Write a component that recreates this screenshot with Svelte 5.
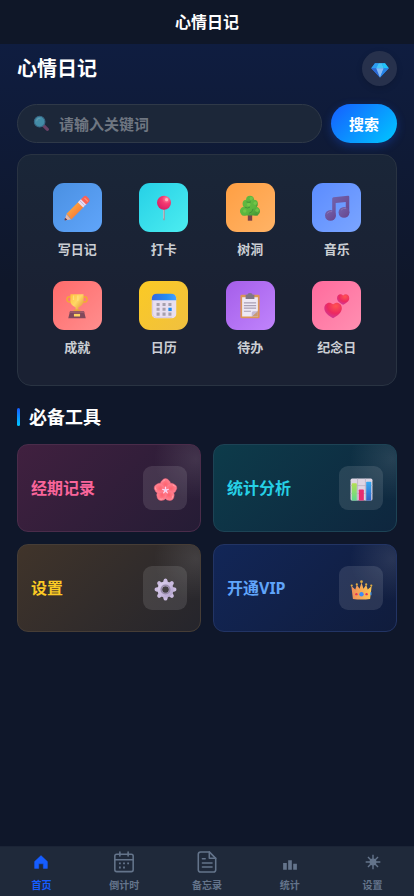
<!-- src/App.svelte -->
<script>
  let keyword = "";
  let activeTab = "home";

  const entries = [
    { name: "写日记", icon: "pencil", color: "blue" },
    { name: "打卡", icon: "pin", color: "cyan" },
    { name: "树洞", icon: "tree", color: "orange" },
    { name: "音乐", icon: "music", color: "indigo" },
    { name: "成就", icon: "trophy", color: "red" },
    { name: "日历", icon: "calendar", color: "yellow" },
    { name: "待办", icon: "clipboard", color: "purple" },
    { name: "纪念日", icon: "hearts", color: "pink" }
  ];

  const tools = [
    { name: "经期记录", icon: "flower", theme: "rose" },
    { name: "统计分析", icon: "chart", theme: "teal" },
    { name: "设置", icon: "gear", theme: "gold" },
    { name: "开通VIP", icon: "crown", theme: "navy" }
  ];

  const tabs = [
    { id: "home", name: "首页" },
    { id: "countdown", name: "倒计时" },
    { id: "memo", name: "备忘录" },
    { id: "stats", name: "统计" },
    { id: "settings", name: "设置" }
  ];

  const petals = [0, 72, 144, 216, 288];
  const teeth = [0, 45, 90, 135, 180, 225, 270, 315];

  const handleSearch = (event) => {
    event.preventDefault();
    keyword = keyword.trim();
  };
</script>

{#snippet emoji(name)}
  <svg class="emoji" viewBox="0 0 32 32" aria-hidden="true">
    {#if name === "gem"}
      <path d="M8 5h16l6 8-14 15L2 13z" fill="#2f86e6" />
      <path d="M8 5h6l-4 8H2z" fill="#2d9df0" />
      <path d="M14 5h5l3 8H10z" fill="#45c5f5" />
      <path d="M19 5h5l6 8h-8z" fill="#20c5f7" />
      <path d="M2 13h8l6 15z" fill="#2c68d4" />
      <path d="M10 13h12l-6 15z" fill="#86b9f3" />
      <path d="M22 13h8L16 28z" fill="#2583e5" />
    {:else if name === "search"}
      <path d="M20 20l7 7" stroke="#9c5383" stroke-width="6" stroke-linecap="round" />
      <circle cx="12.500" cy="12.500" r="10" fill="#5ed0f1" stroke="#4b93b8" stroke-width="2" />
      <path d="M7 11a6 6 0 0 1 6-5" stroke="#92e6fa" stroke-width="2" fill="none" stroke-linecap="round" />
    {:else if name === "pencil"}
      <defs>
        <linearGradient id="wood" x1="0" y1="0" x2="1" y2="1">
          <stop offset="0.3" stop-color="#ffa23d" />
          <stop offset="0.8" stop-color="#f4753a" />
        </linearGradient>
      </defs>
      <path d="M4 23l5 6-6 1q-1 0-1-1z" fill="#e9b7a5" />
      <path d="M2.500 27l2.500 2.500L2.500 30.300Q1.500 30.300 1.700 29z" fill="#5b3a51" />
      <path d="M4 22.500L18 8.500l6 6L9.500 29z" fill="url(#wood)" />
      <path d="M17 9.500l4-4 6 6-4 4z" fill="#e7dbef" />
      <path d="M19 7.500l6 6" stroke="#bfaed0" />
      <path d="M20.500 6l3-3q2-2 4 0l2 2q2 2 0 4l-3 3z" fill="#fb6257" />
      <path d="M25 5l3 3" stroke="#ff8f73" stroke-width="1.500" stroke-linecap="round" />
    {:else if name === "pin"}
      <defs>
        <radialGradient id="ball" cx="0.68" cy="0.25" r="0.8">
          <stop offset="0" stop-color="#ff8ca5" />
          <stop offset="0.4" stop-color="#f33a70" />
          <stop offset="1" stop-color="#d91d65" />
        </radialGradient>
      </defs>
      <path d="M16 17v12" stroke="#91a2ae" stroke-width="2.200" stroke-linecap="round" />
      <path d="M15.400 18v10" stroke="#bec9d2" stroke-width="0.800" />
      <circle cx="16" cy="10" r="8" fill="url(#ball)" />
      <circle cx="19" cy="6.500" r="1.800" fill="#ffb4be" />
    {:else if name === "tree"}
      <defs>
        <linearGradient id="leaf" x1="0" y1="0" x2="1" y2="1">
          <stop offset="0" stop-color="#63b941" />
          <stop offset="0.55" stop-color="#5bb63f" />
          <stop offset="1" stop-color="#3f9134" />
        </linearGradient>
      </defs>
      <path d="M13.500 22h5v8.500h-5z" fill="#7a4148" />
      <g fill="url(#leaf)">
        <circle cx="16" cy="6.500" r="4.500" />
        <circle cx="12" cy="11" r="4.500" />
        <circle cx="20.500" cy="11" r="4.500" />
        <circle cx="9.500" cy="19.500" r="5" />
        <circle cx="22.500" cy="19.500" r="5" />
        <path d="M10 10h12l3 14.500H7z" />
      </g>
      <g fill="#7fcf4d" opacity="0.6">
        <circle cx="17.500" cy="5" r="2" />
        <circle cx="22" cy="10.500" r="2" />
        <circle cx="14.500" cy="12" r="2" />
        <circle cx="24" cy="18.500" r="2" />
        <circle cx="10" cy="19.500" r="2" />
      </g>
      <path d="M10 15q3 2 6 0M15 22q4-1 4.500-5M12 9q3 1 5 0" stroke="#3f8b38" fill="none" />
    {:else if name === "music"}
      <defs>
        <linearGradient id="note" x1="0" y1="0" x2="1" y2="1">
          <stop offset="0" stop-color="#7163ad" />
          <stop offset="1" stop-color="#68458c" />
        </linearGradient>
      </defs>
      <path d="M10.500 5.500Q10.500 4 12 3.800L28.500 2Q30 1.800 30 3v19h-4V9L14.500 10.300V26h-4z" fill="url(#note)" />
      <circle cx="8.500" cy="24.500" r="6.200" fill="url(#note)" />
      <circle cx="24" cy="21" r="6.200" fill="url(#note)" />
      <path d="M5 22q2-2.500 5-2M21 18q2-2.500 5-1.500" stroke="#8c76b6" fill="none" stroke-linecap="round" />
    {:else if name === "trophy"}
      <defs>
        <linearGradient id="cup" x1="0" y1="0" x2="1" y2="1">
          <stop offset="0" stop-color="#ffc13e" />
          <stop offset="0.45" stop-color="#ffd766" />
          <stop offset="1" stop-color="#db882e" />
        </linearGradient>
      </defs>
      <g fill="none" stroke="#f4a936" stroke-width="1.800">
        <circle cx="7.500" cy="8.500" r="3" />
        <circle cx="24.500" cy="8.500" r="3" />
      </g>
      <path d="M8.500 2.500h15V10q0 5-5 7l-1 1v4h-3v-4l-1-1q-5-2-5-7z" fill="url(#cup)" />
      <path d="M12 4v5M17 4v6" stroke="#ffe68b" stroke-width="1.500" opacity="0.7" />
      <path d="M12.500 20h7l1 3h-9z" fill="#e9a33c" />
      <path d="M8 22h16l2 8H6z" fill="#81495b" />
      <path d="M8 22h16l.5 2h-17z" fill="#9b5a69" />
      <path d="M12.500 25h7v3h-7z" fill="#ffd363" />
    {:else if name === "calendar"}
      <defs>
        <linearGradient id="top">
          <stop offset="0" stop-color="#3566df" />
          <stop offset="0.6" stop-color="#258cf2" />
          <stop offset="1" stop-color="#45a1ff" />
        </linearGradient>
      </defs>
      <rect x="2" y="2.500" width="28" height="27.500" rx="5" fill="#e8dff0" />
      <path d="M2 9.500V8q0-6 6-6h16q6 0 6 6v1.500z" fill="url(#top)" />
      <path d="M3 10v15q0 4 4 4h18" stroke="#d2c4df" fill="none" />
      <g fill="#a7a0ad">
        <path d="M7.500 12.500h3.500v3.500H7.500zM14.300 12.500h3.500v3.500h-3.500zM21 12.500h3.500v3.500H21zM7.500 18h3.500v3.500H7.500zM14.300 18h3.500v3.500h-3.500zM7.500 23.500h3.500v3.500H7.500zM14.300 23.500h3.500v3.500h-3.500zM21 23.500h3.500v3.500H21z" />
      </g>
      <path d="M21 18h3.800v3.800H21z" fill="#218cee" />
    {:else if name === "clipboard"}
      <rect x="5" y="3" width="22" height="27" rx="1.500" fill="#dc9655" />
      <path d="M7 6h18v22H7z" fill="#eee9f5" />
      <path d="M25 21v7h-7z" fill="#c79a77" />
      <path d="M18 28v-4q0-2 2-2h5z" fill="#c4b8d3" />
      <path d="M11 3h2q0-2 3-2t3 2h2v5H11z" fill="#807786" />
      <path d="M9 12.500h14M9 15.500h14M9 18.500h14M9 22h8" stroke="#a99fb4" stroke-width="1.300" />
    {:else if name === "hearts"}
      <defs>
        <radialGradient id="heart" cx="0.65" cy="0.22" r="0.85">
          <stop offset="0" stop-color="#ff5450" />
          <stop offset="0.55" stop-color="#ed2961" />
          <stop offset="1" stop-color="#cc3ca0" />
        </radialGradient>
      </defs>
      <path d="M11.500 14C7 10 1.500 13 1.500 18.500c0 5 5 8.500 10 11.500 5-3 10-6.500 10-11.500C21.500 13 16 10 11.500 14z" fill="url(#heart)" />
      <path d="M23 4c-3-3-7-.5-7 3 0 3.500 3.500 5.500 7 7.500 3.500-2 7-4 7-7.500 0-3.500-4-6-7-3z" fill="url(#heart)" />
    {:else if name === "flower"}
      <defs>
        <radialGradient id="petal">
          <stop offset="0" stop-color="#ff626e" />
          <stop offset="1" stop-color="#ff8494" />
        </radialGradient>
      </defs>
      {#each petals as angle}
        <g transform="rotate({angle} 16 17)">
          <path d="M16 17C9 14 8 7 11.500 4.500Q13.500 2 16 2t4.500 2.500C24 7 23 14 16 17z" fill="url(#petal)" stroke="#f6657c" stroke-width="0.500" />
          <path d="M12.500 6q1-2 3-2.300" stroke="#ffabb0" fill="none" />
        </g>
      {/each}
      {#each petals as angle}
        <path d="M16 17v-4" stroke="#ffd9ef" stroke-width="1.500" stroke-linecap="round" transform="rotate({angle} 16 17)" />
      {/each}
      <circle cx="16" cy="17" r="2" fill="#efd1f4" />
    {:else if name === "chart"}
      <defs>
        <linearGradient id="green" x1="0" y1="0" x2="0" y2="1">
          <stop offset="0" stop-color="#b5df53" />
          <stop offset="1" stop-color="#5fd98d" />
        </linearGradient>
        <linearGradient id="azure" x1="0" y1="0" x2="0" y2="1">
          <stop offset="0" stop-color="#35aaf1" />
          <stop offset="1" stop-color="#3063c8" />
        </linearGradient>
      </defs>
      <rect x="2" y="2" width="28" height="28" rx="2" fill="#ded5e3" />
      <path d="M11 2v28M21 2v28M2 11h28M2 21h28" stroke="#b9afc2" />
      <path d="M3.500 9q0-1 1-1H9q1 0 1 1v21H3.500z" fill="url(#green)" />
      <path d="M12.500 17q0-1 1-1H18q1 0 1 1v13h-6.500z" fill="#e72d70" />
      <path d="M22 7q0-1 1-1h4.500q1 0 1 1v23H22z" fill="url(#azure)" />
    {:else if name === "gear"}
      <defs>
        <linearGradient id="metal" x1="0" y1="0" x2="1" y2="1">
          <stop offset="0" stop-color="#d9cdec" />
          <stop offset="1" stop-color="#b6a6cf" />
        </linearGradient>
      </defs>
      {#each teeth as angle}
        <path d="M12.500 9l1-5q.3-2 2.500-2t2.500 2l1 5z" fill="#cbbce0" transform="rotate({angle} 16 16)" />
      {/each}
      <circle cx="16" cy="16" r="7.300" fill="none" stroke="url(#metal)" stroke-width="6" />
      <circle cx="16" cy="16" r="5.500" fill="none" stroke="#978aa9" stroke-width="2" />
    {:else if name === "crown"}
      <defs>
        <linearGradient id="gold">
          <stop offset="0" stop-color="#f08c59" />
          <stop offset="1" stop-color="#ffc851" />
        </linearGradient>
      </defs>
      <path d="M5 28L3 11.500 8 16l2-6 3.500 5L16 7l2.500 8L22 10l2 6 5-4.500L27 28q-11 1.500-22 0z" fill="url(#gold)" />
      <g fill="#dfab42">
        <circle cx="3.500" cy="11" r="1.400" />
        <circle cx="10" cy="9.500" r="1.400" />
        <circle cx="16" cy="6" r="1.700" />
        <circle cx="22" cy="9.500" r="1.400" />
        <circle cx="28.500" cy="11" r="1.400" />
      </g>
      <circle cx="16" cy="22" r="2.800" fill="#3d8bf5" />
      <circle cx="9.500" cy="22" r="1.500" fill="#e83556" />
      <circle cx="22.500" cy="22" r="1.500" fill="#e83556" />
      <path d="M28 19.500v4" stroke="#3d9af5" stroke-width="1.500" />
    {/if}
  </svg>
{/snippet}

<div class="page">
  <header class="navbar">心情日记</header>

  <main>
    <div class="title-row">
      <h1>心情日记</h1>
      <button class="vip" aria-label="VIP">{@render emoji("gem")}</button>
    </div>

    <form class="search" onsubmit={handleSearch}>
      <label class="search-box">
        {@render emoji("search")}
        <input type="text" placeholder="请输入关键词" aria-label="请输入关键词" bind:value={keyword} />
      </label>
      <button class="search-btn">搜索</button>
    </form>

    <section class="entries">
      {#each entries as entry}
        <button class="entry">
          <span class="tile {entry.color}">{@render emoji(entry.icon)}</span>
          <span class="entry-name">{entry.name}</span>
        </button>
      {/each}
    </section>

    <h2>必备工具</h2>

    <section class="tools">
      {#each tools as tool}
        <button class="tool {tool.theme}">
          <span>{tool.name}</span>
          <span class="tool-icon">{@render emoji(tool.icon)}</span>
        </button>
      {/each}
    </section>
  </main>

  <nav class="tabbar">
    {#each tabs as tab}
      <a href="#{tab.id}" class:active={activeTab === tab.id} onclick={() => (activeTab = tab.id)}>
        <svg viewBox="0 0 24 24" aria-hidden="true">
          {#if tab.id === "home"}
            <path d="M12 5l7 6.500V19h-4.500v-5h-5v5H5v-7.500z" fill="currentColor" stroke="currentColor" stroke-width="0.500" stroke-linejoin="round" />
          {:else if tab.id === "countdown"}
            <g fill="none" stroke="currentColor" stroke-width="1.700" stroke-linecap="round">
              <rect x="2" y="3.500" width="20" height="19" rx="2" />
              <path d="M2 9.500h20M7.500 1v4.500M16.500 1v4.500" />
            </g>
            <path d="M6.500 12.500h2v2h-2zM11 12.500h2v2h-2zM15.500 12.500h2v2h-2zM6.500 17h2v2h-2zM11 17h2v2h-2z" fill="currentColor" />
          {:else if tab.id === "memo"}
            <g fill="none" stroke="currentColor" stroke-width="1.700" stroke-linecap="round" stroke-linejoin="round">
              <path d="M14.500 1H5Q2.500 1 2.500 3.500v17Q2.500 23 5 23h14q2.500 0 2.500-2.500V8z" />
              <path d="M14.500 1v7h7M7 8.500h3M7 13h10.500M7 17.500h10.500" />
            </g>
          {:else if tab.id === "stats"}
            <path d="M4.500 13h4v7.500h-4zM10 10h4v10.500h-4zM15.500 14h4v6.500h-4z" fill="currentColor" />
          {:else}
            <circle cx="12" cy="12" r="3.800" fill="currentColor" />
            <path d="M12 4v16M4 12h16M6.500 6.500l11 11M17.500 6.500l-11 11" stroke="currentColor" stroke-width="1.500" />
          {/if}
        </svg>
        <span>{tab.name}</span>
      </a>
    {/each}
  </nav>
</div>

<style>
  :global(body) {
    margin: 0;
    background: #0f172a;
  }

  .page {
    display: flex;
    flex-direction: column;
    min-height: 100vh;
    font-family: "Noto Sans", "Noto Sans CJK SC", sans-serif;
    color: #fff;
  }

  button {
    padding: 0;
    border: 0;
    background: none;
    color: inherit;
    font: inherit;
    cursor: pointer;
  }

  .emoji {
    display: block;
    width: 28px;
    height: 28px;
  }

  .navbar {
    height: 44px;
    line-height: 44px;
    background: #0f1728;
    font-size: 16px;
    font-weight: 700;
    text-align: center;
  }

  main {
    flex: 1;
    padding: 7px 17px 17px;
    background: linear-gradient(180deg, #0f1d40 0, #0f172a 240px);
  }

  .title-row {
    display: flex;
    align-items: center;
    justify-content: space-between;
    margin-bottom: 18px;
  }

  h1 {
    margin: 0;
    font-size: 20px;
    line-height: 32px;
    font-weight: 700;
  }

  .vip {
    display: flex;
    align-items: center;
    justify-content: center;
    width: 35px;
    height: 35px;
    border-radius: 50%;
    background: #27314c;
    box-shadow: 0 2px 6px rgba(0, 0, 0, 0.15);
  }

  .vip .emoji {
    width: 20px;
    height: 20px;
    margin-top: 3px;
  }

  .search {
    display: flex;
    gap: 9px;
    margin-bottom: 11px;
  }

  .search-box {
    display: flex;
    flex: 1;
    align-items: center;
    gap: 9px;
    box-sizing: border-box;
    height: 39px;
    padding: 0 15px;
    border: 1px solid #2f3948;
    border-radius: 20px;
    background: #1c2739;
  }

  .search-box .emoji {
    width: 17px;
    height: 17px;
    opacity: 0.6;
  }

  input {
    flex: 1;
    min-width: 0;
    padding: 0;
    border: 0;
    outline: 0;
    background: none;
    color: #fff;
    font-family: inherit;
    font-size: 15px;
    font-weight: 700;
  }

  input::placeholder {
    color: #6f7681;
    opacity: 1;
  }

  .search-btn {
    width: 66px;
    height: 39px;
    border-radius: 20px;
    background: linear-gradient(135deg, #165dff, #00c8ff);
    box-shadow: 0 3px 10px rgba(22, 93, 255, 0.3);
    font-size: 15px;
    line-height: 20px;
    font-weight: 700;
  }

  .entries {
    display: grid;
    grid-template-columns: repeat(4, 1fr);
    row-gap: 22px;
    margin-bottom: 20px;
    padding: 28px 16px;
    border: 1px solid #293342;
    border-radius: 14px;
    background: linear-gradient(180deg, #1a2638, #1a2133 60%);
  }

  .entry {
    display: flex;
    flex-direction: column;
    align-items: center;
    gap: 7px;
  }

  .tile {
    display: flex;
    align-items: center;
    justify-content: center;
    width: 49px;
    height: 49px;
    border-radius: 11px;
  }

  .entry-name {
    color: #cbced3;
    font-size: 13px;
    line-height: 20px;
    font-weight: 700;
  }

  .blue { background: linear-gradient(135deg, #4a90e2, #60a5fa); }
  .cyan { background: linear-gradient(135deg, #26d0e6, #4cedf0); }
  .orange { background: linear-gradient(135deg, #ff9f43, #ffb366); }
  .indigo { background: linear-gradient(135deg, #5b8cff, #7ba5ff); }
  .red { background: linear-gradient(135deg, #ff6b6b, #ff8e8e); }
  .yellow { background: linear-gradient(135deg, #fbca24, #f0c040); }
  .purple { background: linear-gradient(135deg, #a55eea, #c084fc); }
  .pink { background: linear-gradient(135deg, #ff6b9d, #ff8fb1); }

  h2 {
    display: flex;
    align-items: center;
    gap: 9px;
    margin: 0 0 16px;
    font-size: 18px;
    line-height: 22px;
    font-weight: 700;
  }

  h2::before {
    content: "";
    width: 3px;
    height: 18px;
    border-radius: 2px;
    background: linear-gradient(180deg, #165dff, #00c8ff);
  }

  .tools {
    display: grid;
    grid-template-columns: 1fr 1fr;
    gap: 12px;
  }

  .tool {
    --glow: radial-gradient(circle 42px at calc(100% - 4px) 14px, rgba(255, 255, 255, 0.1), transparent);
    display: flex;
    align-items: center;
    justify-content: space-between;
    height: 88px;
    padding: 0 13px;
    border: 1px solid;
    border-radius: 11px;
    font-size: 16px;
    line-height: 24px;
    font-weight: 700;
  }

  .tool-icon {
    display: flex;
    align-items: center;
    justify-content: center;
    width: 44px;
    height: 44px;
    border-radius: 9px;
    background: rgba(255, 255, 255, 0.11);
  }

  .tool-icon .emoji {
    width: 25px;
    height: 25px;
    margin-top: 2px;
  }

  .rose {
    border-color: #4a2c4a;
    background: var(--glow), linear-gradient(135deg, #40203f, #251c35);
    color: #f9659a;
  }

  .teal {
    border-color: #1d4355;
    background: var(--glow), linear-gradient(135deg, #0d3b4a, #0e263e);
    color: #26d0e6;
  }

  .gold {
    border-color: #463d36;
    background: var(--glow), linear-gradient(135deg, #40342a, #25252c);
    color: #fbca24;
  }

  .navy {
    border-color: #223464;
    background: var(--glow), linear-gradient(135deg, #122657, #101c3c);
    color: #60a5fa;
  }

  .tabbar {
    display: flex;
    box-sizing: border-box;
    height: 50px;
    padding-top: 4px;
    border-top: 1px solid #1b2436;
    background: #1f293a;
  }

  .tabbar a {
    display: flex;
    flex: 1;
    flex-direction: column;
    align-items: center;
    gap: 4px;
    color: #64748b;
    font-size: 10px;
    line-height: 16px;
    font-weight: 700;
    text-decoration: none;
  }

  .tabbar a.active {
    color: #165dff;
  }

  .tabbar svg {
    width: 22px;
    height: 22px;
  }
</style>
